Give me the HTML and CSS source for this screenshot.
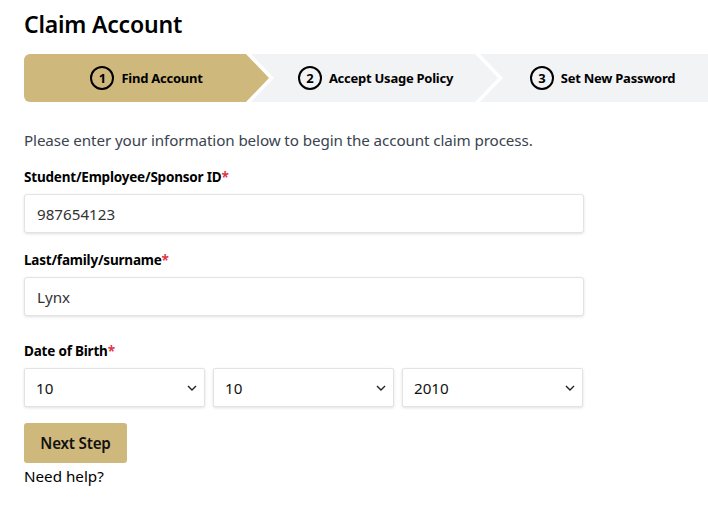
FILE: index.html
```html
<!DOCTYPE html>
<html lang="en">
<head>
<meta charset="utf-8">
<title>Claim Account</title>
<link rel="stylesheet" href="styles.css">
</head>
<body>
<main class="page">
  <h1 class="title">Claim Account</h1>
  <ol class="steps">
    <li class="step step-active"><span class="num">1</span><span class="step-label">Find Account</span></li>
    <li class="step"><span class="num">2</span><span class="step-label">Accept Usage Policy</span></li>
    <li class="step"><span class="num">3</span><span class="step-label">Set New Password</span></li>
  </ol>
  <p class="intro">Please enter your information below to begin the account claim process.</p>
  <form class="form">
    <label class="label" for="sid">Student/Employee/Sponsor ID<span class="req">*</span></label>
    <input class="field" id="sid" type="text" value="987654123">
    <label class="label" for="lname">Last/family/surname<span class="req">*</span></label>
    <input class="field" id="lname" type="text" value="Lynx">
    <label class="label label-dob">Date of Birth<span class="req">*</span></label>
    <div class="dob">
      <div class="sel"><select><option>10</option></select><svg class="chev" viewBox="0 0 10 6" width="10" height="6"><path d="M1 1l4 4 4-4" fill="none" stroke="#222" stroke-width="1.4"/></svg></div>
      <div class="sel"><select><option>10</option></select><svg class="chev" viewBox="0 0 10 6" width="10" height="6"><path d="M1 1l4 4 4-4" fill="none" stroke="#222" stroke-width="1.4"/></svg></div>
      <div class="sel"><select><option>2010</option></select><svg class="chev" viewBox="0 0 10 6" width="10" height="6"><path d="M1 1l4 4 4-4" fill="none" stroke="#222" stroke-width="1.4"/></svg></div>
    </div>
    <button class="btn" type="button">Next Step</button>
    <a class="help">Need help?</a>
  </form>
</main>
</body>
</html>
```
FILE: styles.css
```css
html, body { margin: 0; padding: 0; background: #fff; overflow: hidden; }
body { font-family: "Noto Sans", "Open Sans", sans-serif; color: #000; }
.page { padding: 8px 24px 0 24px; }
.title { margin: 0; font-size: 23px; font-weight: 600; line-height: 32px; letter-spacing: -0.2px; }
.steps { list-style: none; margin: 14px 0 0 0; padding: 0; display: flex; width: 699px; }
.step {
  flex: 0 0 245px; height: 48px; background: #f2f3f5; margin-left: -18px;
  display: flex; align-items: center; justify-content: center; gap: 7px;
  clip-path: polygon(0 0, calc(100% - 23px) 0, 100% 50%, calc(100% - 23px) 100%, 0 100%, 23px 50%);
  font-size: 13px; font-weight: 700; letter-spacing: -0.25px;
}
.step:nth-child(2) { padding-left: 2px; }
.step:nth-child(3) { padding-right: 8px; }
.step-active { margin-left: 0; background: #cfb87c; border-radius: 6px 0 0 6px;
  clip-path: polygon(0 0, calc(100% - 23px) 0, 100% 50%, calc(100% - 23px) 100%, 0 100%); }
.num { width: 20px; height: 20px; border: 2px solid #000; border-radius: 50%; display: flex; align-items: center; justify-content: center; font-size: 13px; font-weight: 700; box-sizing: content-box; }
.intro { margin: 28px 0 0 0; font-size: 15.2px; line-height: 20px; color: #3a4350; letter-spacing: -0.1px; }
.form { display: flex; flex-direction: column; align-items: flex-start; }
.label { font-size: 13.5px; font-weight: 700; line-height: 18px; margin-top: 18px; letter-spacing: -0.2px; }
.label-dob { margin-top: 26px; }
.req { color: #e0383e; }
.field {
  box-sizing: border-box; width: 560px; height: 39px; margin-top: 8px;
  border: 1px solid #e3e3e3; border-radius: 3px; box-shadow: 0 1px 3px rgba(0,0,0,0.12);
  padding: 0 12px; font: 15.2px "Noto Sans", "Open Sans", sans-serif; color: #333; outline: none;
}
.dob { display: flex; gap: 8px; margin-top: 8px; }
.sel { position: relative; }
.sel select {
  appearance: none; -webkit-appearance: none; box-sizing: border-box;
  width: 181px; height: 39px; border: 1px solid #e3e3e3; border-radius: 2px; background: #fff;
  box-shadow: 0 1px 3px rgba(0,0,0,0.12); padding: 0 11px;
  font: 15.2px "Noto Sans", "Open Sans", sans-serif; color: #111; outline: none;
}
.chev { position: absolute; right: 8px; top: 17px; }
.btn {
  margin-top: 16px; width: 103px; height: 40px; border: none; border-radius: 3px; background: #cfb87c;
  font: 600 15.2px "Noto Sans", "Open Sans", sans-serif; color: #111; letter-spacing: -0.2px;
}
.help { margin-top: 3px; font-size: 15.2px; line-height: 20px; color: #000; }
```
